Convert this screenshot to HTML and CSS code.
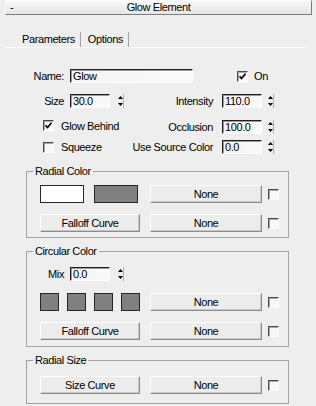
FILE: index.html
```html
<!DOCTYPE html>
<html lang="en">
<head>
  <meta charset="UTF-8" />
  <meta name="viewport" content="width=device-width, initial-scale=1" />
  <title>Glow Element</title>
  <link rel="stylesheet" href="styles.css">
</head>
<body>

  <div class="rollout-head">
    <span class="toggle">-</span>
    <span class="title">Glow Element</span>
  </div>

  <div class="tabs">
    <span class="tab">Parameters</span>
    <span class="tab">Options</span>
  </div>
  <div class="tabs-rule"></div>

  <div class="params">
    <div class="row">
      <span class="lbl">Name:</span>
      <span class="field field-name">Glow</span>
      <span class="check check-on"><svg width="9" height="9" viewBox="0 0 9 9"><path d="M1.5 4.2 L3.5 6.5 L7.5 1.8" fill="none" stroke="#000" stroke-width="1.7"/></svg></span>
      <span class="check-text">On</span>
    </div>

    <div class="row row-size">
      <div class="half">
        <span class="lbl">Size</span>
        <span class="field">30.0</span>
        <span class="spin"><svg width="7" height="14" viewBox="0 0 7 14"><path d="M3.5 2 L6 5 L1 5 Z M1 9 L6 9 L3.5 12 Z" fill="#000"/><path d="M6.5 0 V14" stroke="#b0b0b0"/></svg></span>
      </div>
      <div class="half-right">
        <span class="lbl-right">Intensity</span>
        <span class="field">110.0</span>
        <span class="spin"><svg width="7" height="14" viewBox="0 0 7 14"><path d="M3.5 2 L6 5 L1 5 Z M1 9 L6 9 L3.5 12 Z" fill="#000"/><path d="M6.5 0 V14" stroke="#b0b0b0"/></svg></span>
      </div>
    </div>

    <div class="row row-behind">
      <div class="half opt">
        <span class="check"><svg width="9" height="9" viewBox="0 0 9 9"><path d="M1.5 4.2 L3.5 6.5 L7.5 1.8" fill="none" stroke="#000" stroke-width="1.7"/></svg></span>
        <span class="check-text">Glow Behind</span>
      </div>
      <div class="half-right">
        <span class="lbl-right">Occlusion</span>
        <span class="field">100.0</span>
        <span class="spin"><svg width="7" height="14" viewBox="0 0 7 14"><path d="M3.5 2 L6 5 L1 5 Z M1 9 L6 9 L3.5 12 Z" fill="#000"/><path d="M6.5 0 V14" stroke="#b0b0b0"/></svg></span>
      </div>
    </div>

    <div class="row row-squeeze">
      <div class="half opt">
        <span class="check"></span>
        <span class="check-text">Squeeze</span>
      </div>
      <div class="half-right">
        <span class="lbl-right">Use Source Color</span>
        <span class="field">0.0</span>
        <span class="spin"><svg width="7" height="14" viewBox="0 0 7 14"><path d="M3.5 2 L6 5 L1 5 Z M1 9 L6 9 L3.5 12 Z" fill="#000"/><path d="M6.5 0 V14" stroke="#b0b0b0"/></svg></span>
      </div>
    </div>
  </div>

  <fieldset class="group group-radial">
    <legend>Radial Color</legend>
    <div class="grow first">
      <div class="slot">
        <span class="swatch swatch-wide white"></span>
        <span class="swatch swatch-wide"></span>
      </div>
      <span class="btn btn-map">None</span>
      <span class="check"></span>
    </div>
    <div class="grow">
      <span class="btn btn-left">Falloff Curve</span>
      <span class="btn btn-map">None</span>
      <span class="check"></span>
    </div>
  </fieldset>

  <fieldset class="group group-circular">
    <legend>Circular Color</legend>
    <div class="mix-row">
      <span class="lbl lbl-mix">Mix</span>
      <span class="field">0.0</span>
      <span class="spin"><svg width="7" height="14" viewBox="0 0 7 14"><path d="M3.5 2 L6 5 L1 5 Z M1 9 L6 9 L3.5 12 Z" fill="#000"/><path d="M6.5 0 V14" stroke="#b0b0b0"/></svg></span>
    </div>
    <div class="grow">
      <div class="slot slot-small">
        <span class="swatch"></span>
        <span class="swatch"></span>
        <span class="swatch"></span>
        <span class="swatch"></span>
      </div>
      <span class="btn btn-map">None</span>
      <span class="check"></span>
    </div>
    <div class="grow">
      <span class="btn btn-left">Falloff Curve</span>
      <span class="btn btn-map">None</span>
      <span class="check"></span>
    </div>
  </fieldset>

  <fieldset class="group group-size">
    <legend>Radial Size</legend>
    <div class="grow first">
      <span class="btn btn-left">Size Curve</span>
      <span class="btn btn-map">None</span>
      <span class="check"></span>
    </div>
  </fieldset>

</body>
</html>
```

FILE: styles.css
```css
* {
  box-sizing: border-box;
}
html, body {
  margin: 0;
}
body {
  width: 316px;
  height: 406px;
  overflow: hidden;
  background: #eeeeee;
  font-family: "Liberation Sans", Arial, sans-serif;
  font-size: 11px;
  letter-spacing: -0.4px;
  color: #000;
}

/* rollout title bar */
.rollout-head {
  margin-left: 5px;
  width: 307px;
  height: 15px;
  border: 1px solid;
  border-color: #fafafa #7d7d7d #7d7d7d #fafafa;
  background: linear-gradient(#f8f8f8, #e5e5e5);
  display: flex;
  align-items: center;
  line-height: 13px;
}
.toggle {
  width: 14px;
  padding-left: 4px;
}
.title {
  flex: 1;
  text-align: center;
  padding-right: 14px;
}

/* tabs */
.tabs {
  display: flex;
  margin-top: 17px;
  padding-left: 17px;
  height: 15px;
  line-height: 15px;
}
.tab {
  padding: 0 5px;
  border-right: 1px solid #a4a4a4;
}
.tab + .tab {
  padding-left: 7px;
}
.tabs-rule {
  margin: 0 10px 0 5px;
  height: 1px;
  background: #fbfbfb;
}

/* top parameters */
.params {
  margin-top: 21px;
}
.row {
  display: flex;
  align-items: center;
  height: 14px;
  line-height: 14px;
}
.row-size {
  margin-top: 11px;
}
.row-behind {
  margin-top: 12px;
}
.row-squeeze {
  margin-top: 6px;
}
.half {
  width: 130px;
  display: flex;
  align-items: center;
}
.half-right {
  display: flex;
  align-items: center;
}
.opt {
  padding-left: 43px;
}
.row-behind .opt {
  align-self: flex-start;
  height: 11px;
}
.lbl {
  width: 64px;
  text-align: right;
  margin-right: 6px;
}
.lbl-right {
  width: 83px;
  text-align: right;
  margin-right: 9px;
}
.field {
  width: 40px;
  height: 14px;
  padding-left: 2px;
  border: 1px solid;
  border-color: #1e1e1e #fdfdfd #fdfdfd #1e1e1e;
  box-shadow: inset 1px 1px 0 #9a9a9a;
  background: linear-gradient(90deg, #f4f4f4, #fafafa);
  line-height: 12px;
}
.field-name {
  width: 123px;
}
.spin {
  width: 7px;
  height: 14px;
  margin-left: 7px;
  display: flex;
}
.half-right .spin {
  margin-left: 5px;
}
.check {
  width: 11px;
  height: 11px;
  border: 1px solid;
  border-color: #4a4a4a #ffffff #ffffff #4a4a4a;
  box-shadow: inset 1px 1px 0 #a8a8a8;
  background: #f7f7f7;
  display: flex;
  align-items: center;
  justify-content: center;
}
.check-on {
  margin-left: 44px;
}
.check-text {
  margin-left: 6px;
}
.opt .check-text {
  margin-left: 7px;
}

/* group boxes */
.group {
  margin: 10px 0 0 26px;
  width: 263px;
  min-width: 0;
  padding: 0 0 6px 0;
  border: 1px solid #a3a3a3;
}
.group legend {
  margin-left: 6px;
  padding: 0 2px;
  line-height: 14px;
}
.group-radial {
  padding-bottom: 5px;
}
.group-circular,
.group-size {
  margin-top: 6px;
}
.group-size {
  padding-bottom: 9px;
}
.grow {
  display: flex;
  align-items: center;
  height: 18px;
  padding-left: 13px;
  margin-top: 11px;
}
.group-radial .grow.first {
  margin-top: 7px;
}
.group-size .grow.first {
  margin-top: 9px;
}
.group-circular .mix-row + .grow {
  margin-top: 12px;
}
.mix-row {
  display: flex;
  align-items: center;
  height: 14px;
  line-height: 14px;
  margin-top: 9px;
}
.lbl-mix {
  width: 37px;
}
.slot {
  width: 100px;
  display: flex;
  gap: 10px;
}
.slot-small {
  gap: 8px;
}
.swatch {
  width: 19px;
  height: 18px;
  border: 1px solid #262626;
  background: #808080;
}
.swatch-wide {
  width: 44px;
}
.swatch.white {
  background: #ffffff;
}
.btn {
  height: 18px;
  border: 1px solid;
  border-color: #ffffff #8c8c8c #8c8c8c #ffffff;
  box-shadow: inset -1px -1px 0 #c9c9c9;
  background: #ececec;
  text-align: center;
  line-height: 16px;
}
.btn-left {
  width: 100px;
}
.btn-map {
  width: 112px;
  margin-left: 10px;
}
.grow .check {
  margin-left: 6px;
}
```
